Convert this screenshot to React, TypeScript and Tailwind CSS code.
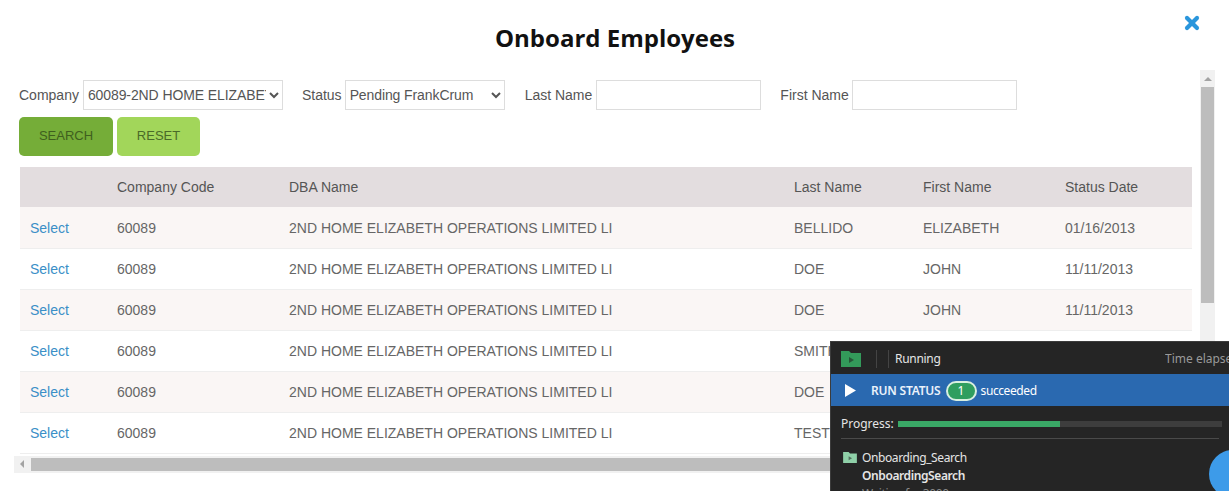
import React from 'react';
import { X } from 'lucide-react';

const rows = [
    { lastName: 'BELLIDO', firstName: 'ELIZABETH', date: '01/16/2013' },
    { lastName: 'DOE', firstName: 'JOHN', date: '11/11/2013' },
    { lastName: 'DOE', firstName: 'JOHN', date: '11/11/2013' },
    { lastName: 'SMITH', firstName: 'JOHN', date: '11/11/2013' },
    { lastName: 'DOE', firstName: 'JANE', date: '11/11/2013' },
    { lastName: 'TEST', firstName: 'JOHN', date: '11/11/2013' },
];

const FolderIcon: React.FC<{ className?: string }> = ({ className }) => (
    <svg viewBox="0 0 20 16" className={className}>
        <path d="M0 0h8l2 2h10v14H0z" fill="currentColor" />
        <path d="M8 6l5 3-5 3z" fill="#1f1f1f" fillOpacity="0.55" />
    </svg>
);

const RunPanel: React.FC = () => (
    <div className="absolute left-[830px] top-[341px] h-[150px] w-[399px] overflow-hidden border-l border-t border-[#3c3c3c] bg-[#252525] font-['Noto_Sans',sans-serif] text-[12px] text-[#e6e6e6]">
        <div className="flex h-[32px] items-center pl-[10px] pt-[2px]">
            <FolderIcon className="h-[16px] w-[20px] text-[#339a5a]" />
            <div className="ml-[15px] h-[18px] w-px bg-[#444]" />
            <div className="ml-[11px] h-[18px] w-px bg-[#444]" />
            <span className="ml-[6px] tracking-[-0.3px]">Running</span>
            <span className="ml-auto w-[64px] overflow-hidden whitespace-nowrap text-[#9a9a9a]">Time elapsed</span>
        </div>
        <div className="flex h-[32px] items-center bg-[#2a69b0] pl-[14px] pt-[1px] text-white">
            <svg viewBox="0 0 12 14" className="h-[13px] w-[11px]">
                <path d="M0 0l12 7-12 7z" fill="#fff" />
            </svg>
            <span className="ml-[15px] font-semibold tracking-[-0.2px] text-[#eaf2fb]">RUN STATUS</span>
            <span className="ml-[5px] flex h-[20px] w-[31px] items-center justify-center rounded-full border-2 border-[#d8efe0] bg-[#2f9e5f]">1</span>
            <span className="ml-[4px] tracking-[-0.4px]">succeeded</span>
        </div>
        <div className="mx-[10px] flex h-[33px] items-center border-b border-[#4a4a4a] pt-[3px]">
            <span>Progress:</span>
            <div className="ml-[4px] h-[6px] w-[324px] shrink-0 bg-[#3d3d3d]">
                <div className="h-full w-[162px] bg-[#3aa866]" />
            </div>
        </div>
        <div className="flex pl-[12px] pt-[10px]">
            <FolderIcon className="mt-[3px] h-[11px] w-[14px] text-[#8fd0a8]" />
            <div className="ml-[5px] leading-[18px] tracking-[-0.4px]">
                <div>Onboarding_Search</div>
                <div className="font-semibold">OnboardingSearch</div>
                <div className="text-[#8a8a8a]">Waiting for 3000</div>
            </div>
        </div>
        <div className="absolute left-[378px] top-[108px] h-[48px] w-[48px] rounded-full bg-[#3d9be9]" />
    </div>
);

export default function App() {
    return (
        <div className="relative h-[491px] w-[1229px] overflow-hidden bg-white font-['Liberation_Sans',Arial,sans-serif] text-[14px] text-[#555]">
            <div className="flex h-[70px] items-start justify-center pl-[1px] pt-[21px]">
                <h1 className="font-['Open_Sans',sans-serif] text-[24px] font-bold leading-[34px] text-[#111]">Onboard Employees</h1>
            </div>
            <button className="absolute left-[1182px] top-[13px] text-[#2a96dc]" aria-label="Close">
                <X className="h-[20px] w-[20px]" strokeWidth={5} />
            </button>

            <div className="flex h-[402px] pl-[14px]">
                <div className="w-[1186px] shrink-0">
                    <div className="pl-[5px]">
                        <div className="flex h-[47px] items-start pt-[10px]">
                            <label className="flex items-center">
                                Company
                                <select className="ml-[4px] h-[30px] w-[200px] border border-[#ddd] bg-white text-[14px] tracking-[-0.1px] text-[#555]">
                                    <option>60089-2ND HOME ELIZABETH OPERATIONS LIMITED LI</option>
                                </select>
                            </label>
                            <label className="ml-[19px] flex items-center">
                                Status
                                <select className="ml-[3px] h-[30px] w-[160px] border border-[#ddd] bg-white text-[14px] tracking-[-0.1px] text-[#555]">
                                    <option>Pending FrankCrum</option>
                                </select>
                            </label>
                            <label className="ml-[20px] flex items-center">
                                Last Name
                                <input className="ml-[4px] h-[30px] w-[165px] border border-[#ddd] bg-white" />
                            </label>
                            <label className="ml-[19px] flex items-center">
                                First Name
                                <input className="ml-[3px] h-[30px] w-[165px] border border-[#ddd] bg-white" />
                            </label>
                        </div>
                        <div className="flex gap-[4px] text-[13px]">
                            <button className="h-[39px] w-[94px] rounded-[5px] bg-[#75ad38] pb-[2px] text-[#3f5f1e]">SEARCH</button>
                            <button className="h-[39px] w-[83px] rounded-[5px] bg-[#a2d65a] pb-[2px] text-[#4a6a28]">RESET</button>
                        </div>
                        <table className="ml-px mt-[11px] w-[1172px] table-fixed border-collapse text-left text-[#666]">
                            <colgroup>
                                <col className="w-[87px]" />
                                <col className="w-[172px]" />
                                <col className="w-[505px]" />
                                <col className="w-[129px]" />
                                <col className="w-[142px]" />
                                <col className="w-[137px]" />
                            </colgroup>
                            <thead>
                                <tr className="h-[40px] bg-[#e3dddf] text-[#555]">
                                    <th className="px-[10px] font-normal" />
                                    <th className="px-[10px] font-normal">Company Code</th>
                                    <th className="px-[10px] font-normal">DBA Name</th>
                                    <th className="px-[10px] font-normal">Last Name</th>
                                    <th className="px-[10px] font-normal">First Name</th>
                                    <th className="px-[10px] font-normal">Status Date</th>
                                </tr>
                            </thead>
                            <tbody>
                                {rows.map((r, i) => (
                                    <tr key={i} className={`h-[41px] border-b border-[#eee] ${i % 2 === 0 ? 'bg-[#faf6f5]' : 'bg-white'}`}>
                                        <td className="px-[10px] pt-[2px] text-[#3a8fc7]">Select</td>
                                        <td className="px-[10px] pt-[2px]">60089</td>
                                        <td className="whitespace-nowrap px-[10px] pt-[2px]">2ND HOME ELIZABETH OPERATIONS LIMITED LI</td>
                                        <td className="px-[10px] pt-[2px]">{r.lastName}</td>
                                        <td className="px-[10px] pt-[2px]">{r.firstName}</td>
                                        <td className="px-[10px] pt-[2px]">{r.date}</td>
                                    </tr>
                                ))}
                            </tbody>
                        </table>
                    </div>
                    {/* horizontal scrollbar */}
                    <div className="mt-[2px] flex h-[17px] items-center bg-[#f1f1f1]">
                        <div className="ml-[6px] h-0 w-0 border-y-[4px] border-r-[4px] border-y-transparent border-r-[#a3a3a3]" />
                        <div className="ml-[7px] h-[13px] w-[1140px] bg-[#bdbdbd]" />
                    </div>
                </div>
                {/* vertical scrollbar */}
                <div className="h-[402px] w-[15px] bg-[#f1f1f1]">
                    <div className="flex h-[17px] items-center justify-center">
                        <div className="h-0 w-0 border-x-[4px] border-b-[4px] border-x-transparent border-b-[#a3a3a3]" />
                    </div>
                    <div className="mx-auto h-[216px] w-[13px] bg-[#bdbdbd]" />
                </div>
            </div>
            <RunPanel />
        </div>
    );
}
